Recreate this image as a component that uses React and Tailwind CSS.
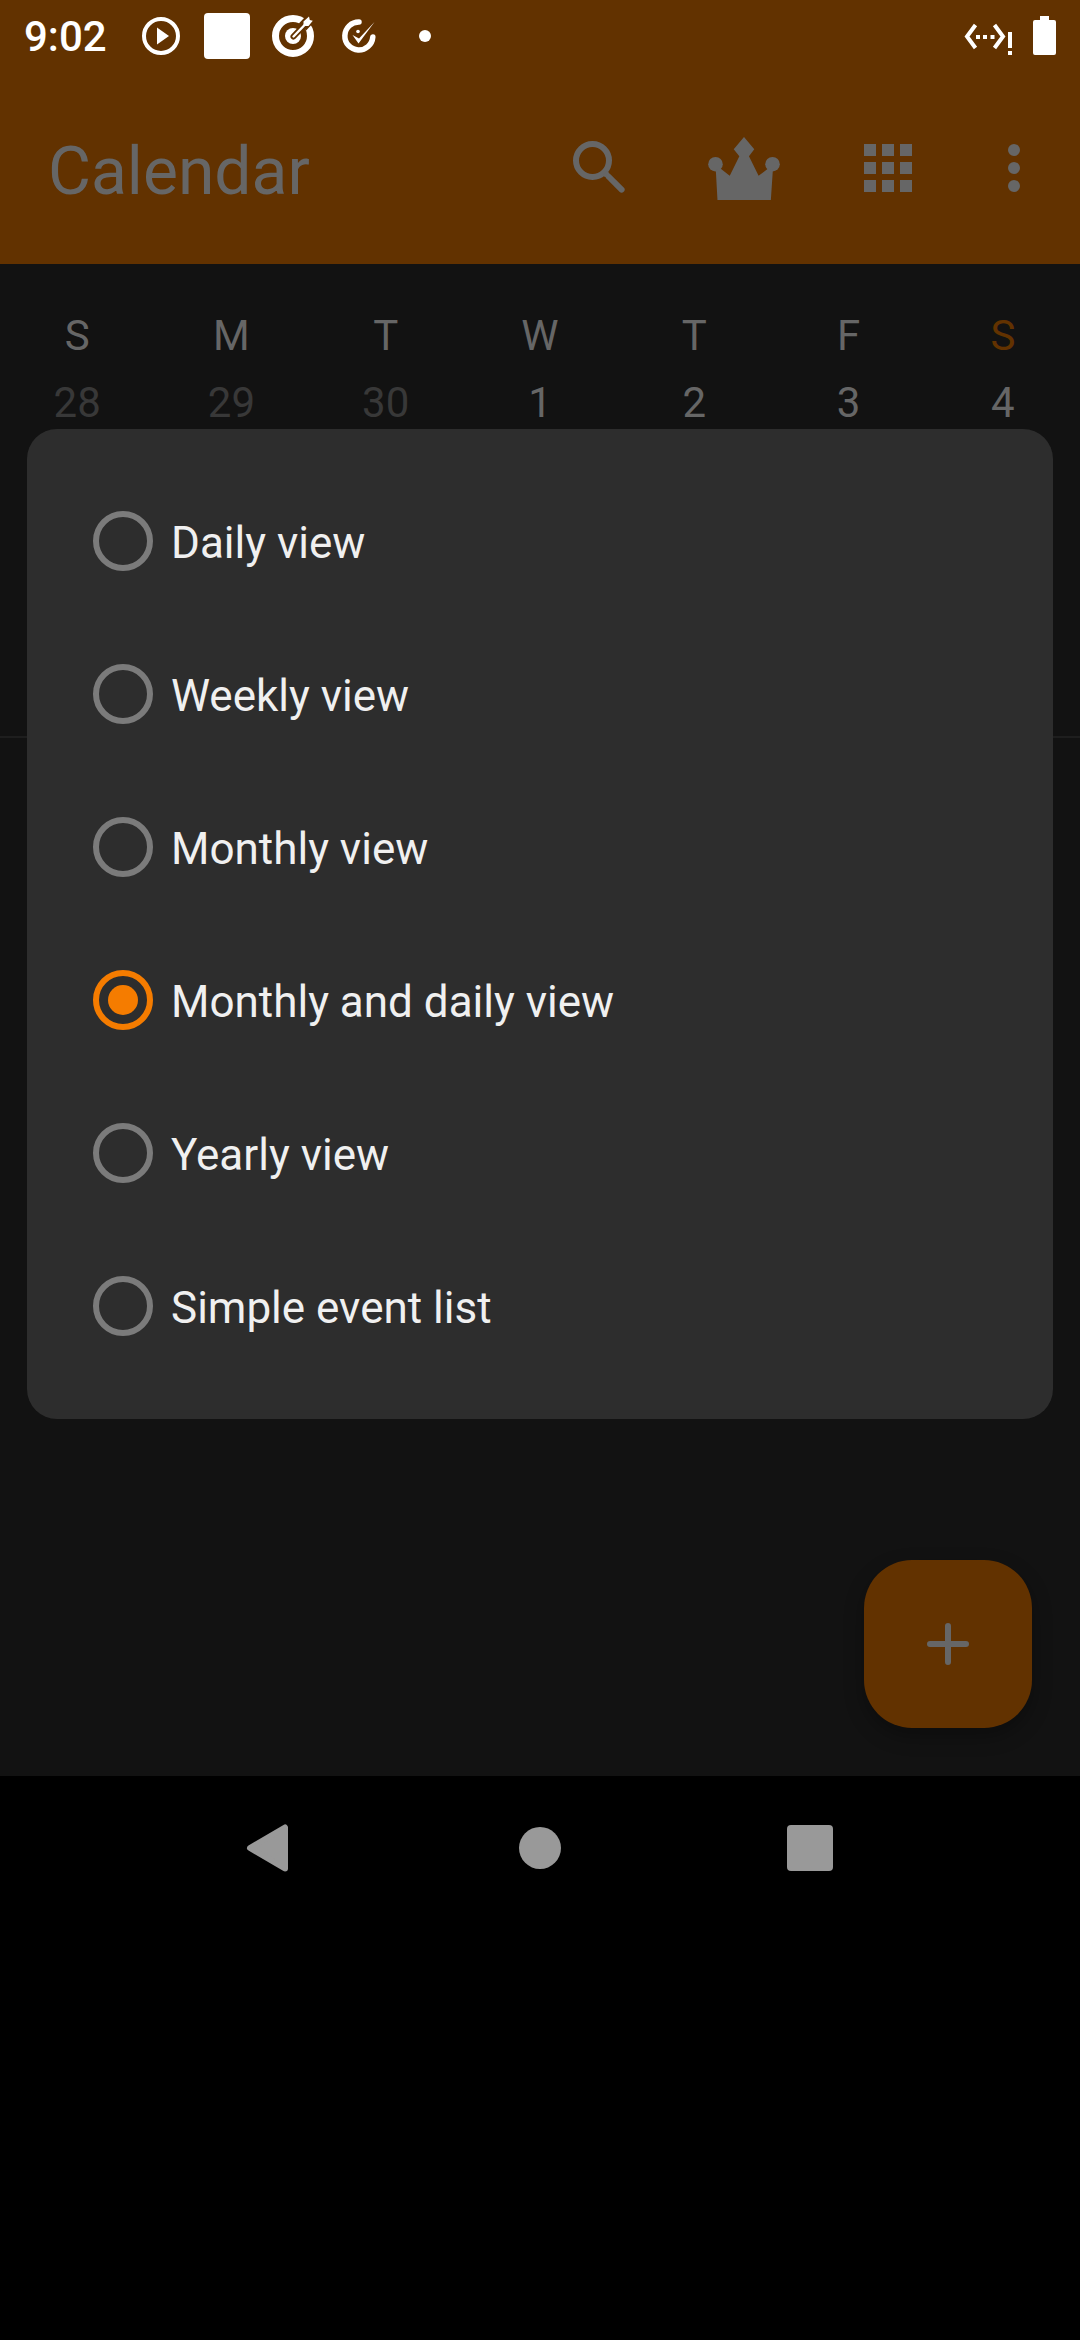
import { useState } from "react";

const WEEK = [
  { day: "Sunday", date: 28, muted: true },
  { day: "Monday", date: 29, muted: true },
  { day: "Tuesday", date: 30, muted: true },
  { day: "Wednesday", date: 1 },
  { day: "Thursday", date: 2 },
  { day: "Friday", date: 3 },
  { day: "Saturday", date: 4, today: true },
];

const VIEWS = [
  "Daily view",
  "Weekly view",
  "Monthly view",
  "Monthly and daily view",
  "Yearly view",
  "Simple event list",
];

function StatusBar() {
  return (
    <div className="flex h-[72px] items-center justify-between bg-[#623200] px-6 text-white">
      <div className="flex items-center">
        <span className="w-[104px] pt-0.5 text-[42px] leading-[72px] font-medium">9:02</span>
        <svg viewBox="0 0 66 72" className="h-[72px] w-[66px]" fill="none" aria-hidden="true">
          <circle cx="33" cy="36" r="17" stroke="currentColor" strokeWidth="4" />
          <path d="M29 27.500 41 36 29 44.500z" fill="currentColor" />
        </svg>
        <svg viewBox="0 0 66 72" className="h-[72px] w-[66px]" aria-hidden="true">
          <rect x="10" y="13" width="46" height="46" rx="4" fill="currentColor" />
        </svg>
        <svg viewBox="0 0 66 72" className="h-[72px] w-[66px]" fill="none" aria-hidden="true">
          <circle cx="33" cy="36" r="17.500" stroke="currentColor" strokeWidth="7" />
          <circle cx="33" cy="36" r="8" fill="currentColor" />
          <path d="M33.500 36.500 43 26.500" stroke="#623200" strokeWidth="6" strokeLinecap="round" />
          <path d="M42.500 27 51 18" stroke="#623200" strokeWidth="10" />
          <path d="M33.500 36.500 47 22.500" stroke="currentColor" strokeWidth="2.400" strokeLinecap="round" />
          <path d="M43.500 26V21.500l5.500-5 .8 3.500 3 .8-4.300 5.200z" fill="currentColor" />
        </svg>
        <svg viewBox="0 0 66 72" className="h-[72px] w-[66px]" fill="none" aria-hidden="true">
          <path d="M33 22A14 14 0 1 0 46.800 37" stroke="currentColor" strokeWidth="5.500" strokeLinecap="round" />
          <path d="M26.500 35 32.500 43.500 48.500 22 33 38.500z" fill="currentColor" />
          <circle cx="32" cy="31.500" r="1.800" fill="currentColor" />
        </svg>
        <svg viewBox="0 0 66 72" className="h-[72px] w-[66px]" aria-hidden="true">
          <circle cx="33" cy="36" r="6" fill="currentColor" />
        </svg>
      </div>
      <div className="flex items-center gap-5">
        <svg viewBox="0 0 50 72" className="h-[72px] w-[50px]" fill="none" aria-hidden="true">
          <path d="M12.500 25 4 36.500 12.500 48M31.500 25 40 36.500 31.500 48" stroke="currentColor" strokeWidth="4" />
          <path d="M13 35h4v4h-4zM20 35h4v4h-4zM27.500 35h4v4h-4zM45 32h4v16h-4zM45 51h4v4h-4z" fill="currentColor" />
        </svg>
        <svg viewBox="0 0 23 72" className="h-[72px] w-[23px]" aria-hidden="true">
          <path d="M7 16h9v4h5a2 2 0 0 1 2 2v31a2 2 0 0 1-2 2H2a2 2 0 0 1-2-2V22a2 2 0 0 1 2-2h5z" fill="currentColor" />
        </svg>
      </div>
    </div>
  );
}

function ToolButton({ label, children }) {
  return (
    <button type="button" aria-label={label} className="flex w-36 items-center justify-center">
      {children}
    </button>
  );
}

function AppBar() {
  return (
    <header className="flex h-[192px] items-center bg-[#623200] pr-3 pl-12 text-[#666666]">
      <h1 className="flex-1 pt-2 text-[66px] leading-[78px]">Calendar</h1>
      <div className="flex items-center">
        <ToolButton label="Search">
          <svg viewBox="0 0 24 24" className="size-[72px]" fill="none" stroke="currentColor" strokeWidth="2" strokeLinecap="round">
            <circle cx="9.500" cy="9.500" r="5.500" />
            <path d="M13.700 13.700 14.500 14.500" strokeLinecap="butt" />
            <path d="M15 15 19.200 19.200" />
          </svg>
        </ToolButton>
        <ToolButton label="Upgrade">
          <svg viewBox="474 50 216 190" className="h-[63px] w-[72px]" fill="currentColor">
            <circle cx="496" cy="132" r="22" />
            <circle cx="668" cy="132" r="22" />
            <path d="M582 50 613 87 597 108 626 167 655 145 669 150 663 240H502L497 150 511 145 539 167 568 108 551 87z" />
          </svg>
        </ToolButton>
        <ToolButton label="Change view">
          <svg viewBox="0 0 48 48" className="size-12" fill="currentColor">
            <path d="M0 0h12v12H0zM18 0h12v12H18zM36 0h12v12H36zM0 18h12v12H0zM18 18h12v12H18zM36 18h12v12H36zM0 36h12v12H0zM18 36h12v12H18zM36 36h12v12H36z" />
          </svg>
        </ToolButton>
        <button type="button" aria-label="More options" className="flex w-[108px] items-center justify-center">
          <svg viewBox="0 0 12 48" className="h-12 w-3" fill="currentColor">
            <circle cx="6" cy="6" r="6" />
            <circle cx="6" cy="24" r="6" />
            <circle cx="6" cy="42" r="6" />
          </svg>
        </button>
      </div>
    </header>
  );
}

function Calendar() {
  return (
    <div className="min-h-[474px] border-b-2 border-[#1e1e1e] pt-[38px]">
      <table className="w-full table-fixed text-center text-[42px] leading-[67px] text-[#666666]">
        <thead>
          <tr>
            {WEEK.map(({ day, today }) => (
              <th key={day} scope="col" abbr={day} className={today ? "p-0 font-normal text-[#623200]" : "p-0 font-normal"}>
                {day[0]}
              </th>
            ))}
          </tr>
        </thead>
        <tbody>
          <tr>
            {WEEK.map(({ day, date, muted }) => (
              <td key={day} className={muted ? "p-0 text-[#383838]" : "p-0"}>
                {date}
              </td>
            ))}
          </tr>
        </tbody>
      </table>
    </div>
  );
}

function ViewDialog() {
  const [view, setView] = useState("Monthly and daily view");
  return (
    <div className="absolute inset-x-0 top-[72px] bottom-0 flex items-center px-[27px]">
      <div role="dialog" aria-label="Change view" className="w-full rounded-[30px] bg-[#2d2d2d] pt-[35px] pb-[37px]">
        {VIEWS.map((name) => (
          <label key={name} className="flex h-[153px] items-center gap-[18px] px-[66px] text-[44px] leading-[48px] text-[#f0f0f0]">
            <input
              type="radio"
              name="view"
              checked={view === name}
              onChange={() => setView(name)}
              className="grid size-[60px] shrink-0 appearance-none place-content-center rounded-full border-6 border-[#7b7b7b] before:size-[30px] before:rounded-full before:content-[''] checked:border-[#f57c00] checked:before:bg-[#f57c00]"
            />
            <span className="pt-1">{name}</span>
          </label>
        ))}
      </div>
    </div>
  );
}

function NavigationBar() {
  return (
    <nav className="flex h-36 items-center justify-center text-[#999999]">
      <button type="button" aria-label="Back" className="flex w-1/4 justify-center">
        <svg viewBox="0 0 48 48" className="size-12" fill="currentColor" stroke="currentColor" strokeWidth="6" strokeLinejoin="round">
          <path d="M39 3.500V44.500L4 24z" />
        </svg>
      </button>
      <button type="button" aria-label="Home" className="flex w-1/4 justify-center">
        <span className="size-[42px] rounded-full bg-[#999999]" />
      </button>
      <button type="button" aria-label="Recent apps" className="flex w-1/4 justify-center">
        <span className="size-[46px] rounded-[4px] bg-[#999999]" />
      </button>
    </nav>
  );
}

export default function App() {
  return (
    <div className="flex min-h-screen flex-col bg-black pb-[420px] font-[Roboto,sans-serif]">
      <div className="relative flex flex-1 flex-col bg-[#121212]">
        <StatusBar />
        <AppBar />
        <main>
          <Calendar />
        </main>
        <button
          type="button"
          aria-label="New event"
          className="absolute right-12 bottom-12 flex size-[168px] items-center justify-center rounded-[48px] bg-[#623200] text-[#666666] shadow-[0_8px_20px_rgba(0,0,0,0.3)]"
        >
          <svg viewBox="0 0 42 42" className="size-[42px]" fill="none" stroke="currentColor" strokeWidth="6" strokeLinecap="round">
            <path d="M21 3v36M3 21h36" />
          </svg>
        </button>
        <ViewDialog />
      </div>
      <NavigationBar />
    </div>
  );
}
